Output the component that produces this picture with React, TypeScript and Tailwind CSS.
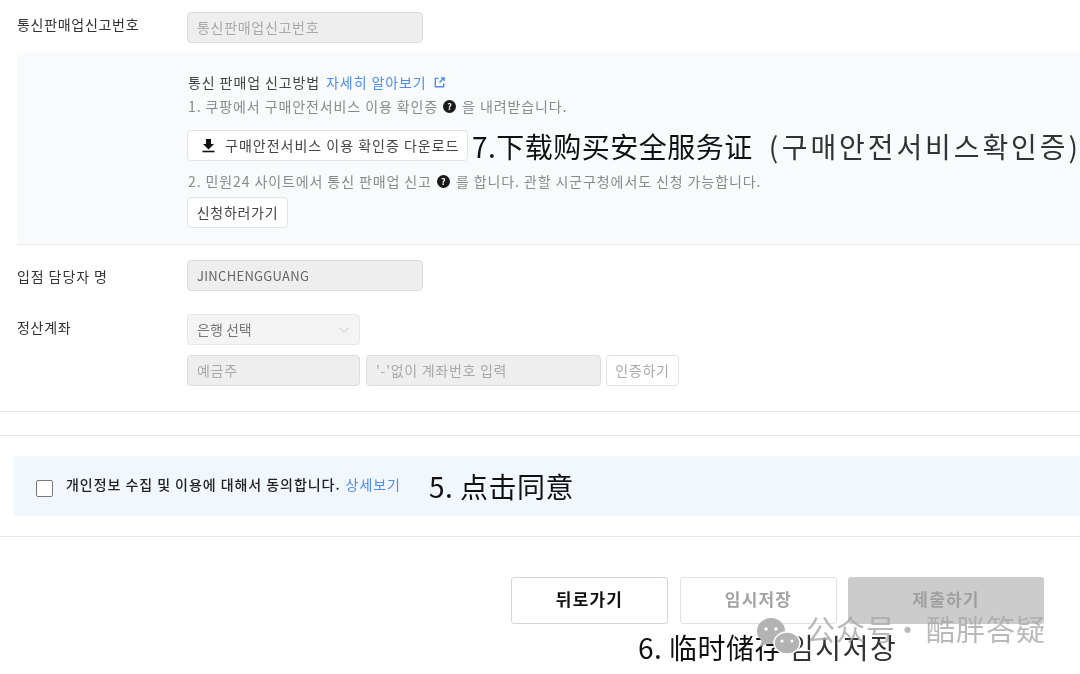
import React from 'react';

const KO = "font-['Noto_Sans_CJK_KR','Noto_Sans',sans-serif]";
const ANNOT = "font-['Noto_Sans_CJK_SC','Noto_Sans_CJK_KR',sans-serif]";

function HelpDot() {
    return (
        <span className="inline-flex items-center justify-center w-[13px] h-[13px] rounded-full bg-[#1a1a1a] text-white text-[9px] font-bold leading-none tracking-normal ml-[5px] mr-[6px]">?</span>
    );
}

function DisabledInput({ text, className = '', dark = false }: { text: string; className?: string; dark?: boolean }) {
    return (
        <div className={`h-[31px] flex items-center px-[9px] rounded-[4px] border border-[#dcdcdc] bg-[#eeeeee] ${dark ? 'text-[13px] text-[#666666] tracking-[0.3px]' : 'text-[14px] text-[#a9a9a9] tracking-[0.7px]'} ${className}`}>
            {text}
        </div>
    );
}

function Annotation({ children, className }: { children: React.ReactNode; className: string }) {
    return <div className={`absolute whitespace-nowrap text-[#111111] text-[28px] leading-none ${ANNOT} ${className}`}>{children}</div>;
}

export default function App() {
    return (
        <div className={`relative w-[1080px] h-[674px] overflow-hidden bg-white text-[#333333] ${KO} blur-[0.4px]`}>
            {/* 통신판매업 */}
            <div className="flex pt-[12px] pl-[17px]">
                <div className="w-[170px] text-[14px] tracking-[0.7px] leading-[25px] text-[#333333]">통신판매업신고번호</div>
                <DisabledInput text="통신판매업신고번호" className="w-[236px]" />
            </div>

            {/* Guide panel */}
            <div className="ml-[17px] mt-[10px] h-[192px] pl-[170px] pt-[19px] bg-[#f9fafc] border-b border-[#e9e9e9] text-[14px] tracking-[0.9px]">
                <div className="flex items-center h-[20px] pl-[1px] text-[#444444]">
                    통신 판매업 신고방법
                    <span className="ml-[6px] text-[#4d8df0]">자세히 알아보기</span>
                    <svg className="ml-[6px] w-[13px] h-[13px] text-[#4d8df0]" viewBox="0 0 14 14" fill="none" stroke="currentColor" strokeWidth="1.5">
                        <path d="M6 2.5H2.5v9h9V8" />
                        <path d="M7 7l5-5M8.5 2H12v3.5" />
                    </svg>
                </div>
                <div className="flex items-center h-[20px] mt-[4px] pl-[1px] text-[#8a8a8a]">
                    1. 쿠팡에서 구매안전서비스 이용 확인증<HelpDot />을 내려받습니다.
                </div>
                <button className="mt-[14px] flex items-center w-[281px] h-[31px] pl-[13px] bg-white border border-[#dfe3ea] rounded-[4px] tracking-[1px] text-[#444444] whitespace-nowrap">
                    <svg className="w-[15px] h-[15px] mr-[9px] text-[#111111]" viewBox="0 0 15 15" fill="currentColor">
                        <path d="M5 1h5v5h3l-5.5 5.5L2 6h3z" />
                        <rect x="1.5" y="12.7" width="12" height="1.6" />
                    </svg>
                    구매안전서비스 이용 확인증 다운로드
                </button>
                <div className="flex items-center h-[20px] mt-[10px] pl-[1px] text-[#8a8a8a]">
                    2. 민원24 사이트에서 통신 판매업 신고<HelpDot />를 합니다. 관할 시군구청에서도 신청 가능합니다.
                </div>
                <button className="mt-[6px] block w-[101px] h-[31px] bg-white border border-[#dfe3ea] rounded-[4px] tracking-[0.7px] text-[#444444] whitespace-nowrap">
                    신청하러가기
                </button>
            </div>

            {/* 담당자 */}
            <div className="flex mt-[15px] pl-[17px]">
                <div className="w-[170px] text-[14px] tracking-[0.9px] leading-[33px] text-[#333333]">입점 담당자 명</div>
                <DisabledInput text="JINCHENGGUANG" className="w-[236px]" dark />
            </div>

            {/* 정산계좌 */}
            <div className="flex mt-[21px] pl-[17px]">
                <div className="w-[170px] text-[14px] tracking-[0.7px] leading-[26px] text-[#333333]">정산계좌</div>
                <div className="flex flex-col gap-[10px]">
                    <div className="w-[173px] h-[31px] flex items-center justify-between px-[9px] rounded-[4px] border border-[#e6e6e6] bg-[#f4f4f4] text-[14px] text-[#777777]">
                        은행 선택
                        <svg className="w-[12px] h-[12px] text-[#c4c4c4]" viewBox="0 0 12 12" fill="none" stroke="currentColor" strokeWidth="1">
                            <path d="M1 3.5l5 5 5-5" />
                        </svg>
                    </div>
                    <div className="flex">
                        <DisabledInput text="예금주" className="w-[173px]" />
                        <DisabledInput text="'-'없이 계좌번호 입력" className="w-[235px] ml-[6px]" />
                        <button className="ml-[5px] w-[73px] h-[31px] bg-white border border-[#e3e3e3] rounded-[4px] text-[14px] tracking-[0.7px] text-[#a9a9a9] whitespace-nowrap">인증하기</button>
                    </div>
                </div>
            </div>

            <div className="mt-[25px] border-t border-[#e6e6e6]" />
            <div className="mt-[23px] border-t border-[#e6e6e6]" />

            {/* 동의 */}
            <div className="ml-[14px] mt-[20px] h-[60px] flex items-center pl-[22px] bg-[#f2f6fd] text-[14px] tracking-[0.95px] whitespace-nowrap">
                <div className="w-[17px] h-[17px] mt-[4px] mr-[13px] bg-white border-[1.5px] border-[#777777] rounded-[2px]" />
                <span className="font-medium text-[#222222] -mt-[3px]">개인정보 수집 및 이용에 대해서 동의합니다.</span>
                <span className="ml-[5px] text-[#4d8df0] -mt-[3px]">상세보기</span>
            </div>
            <div className="mt-[20px] border-t border-[#e6e6e6]" />

            {/* Footer buttons */}
            <div className="flex justify-end pr-[36px] mt-[40px] text-[17px] tracking-[1.2px] font-bold">
                <button className="w-[157px] h-[47px] pb-[3px] bg-white border border-[#d5d7dc] rounded-[3px] text-[#111111]">뒤로가기</button>
                <button className="ml-[12px] w-[157px] h-[47px] pb-[3px] bg-white border border-[#e1e2e6] rounded-[3px] text-[#a3a3a3]">임시저장</button>
                <button className="ml-[11px] w-[196px] h-[47px] pb-[3px] bg-[#cccccc] rounded-[3px] text-[#a0a0a0]">제출하기</button>
            </div>

            {/* Annotations over the form */}
            <Annotation className="left-[472px] top-[132px] tracking-[0.5px]">
                7.下载购买安全服务证
                <span className="ml-[16px] text-[#333333]">(</span>
                <span className="ml-[3px] tracking-[2.9px] text-[#333333]">구매안전서비스확인증</span>
                <span className="text-[#333333]">)</span>
            </Annotation>
            <Annotation className="left-[429px] top-[472px] tracking-[0.5px]">5. 点击同意</Annotation>
            <Annotation className="left-[638px] top-[633px] tracking-[0.5px]">
                6. 临时储存<span className="ml-[5px] tracking-[1.5px] text-[#333333]">임시저장</span>
            </Annotation>

            {/* Watermark */}
            <svg className="absolute left-[756px] top-[616px] w-[46px] h-[40px] text-[#b3b3b3]" viewBox="0 0 46 40">
                <ellipse cx="15" cy="15" rx="14" ry="13" fill="currentColor" />
                <path d="M6 24l-2 7 8-4z" fill="currentColor" />
                <circle cx="10" cy="13" r="1.8" fill="#ffffff" />
                <circle cx="20" cy="13" r="1.8" fill="#ffffff" />
                <ellipse cx="31" cy="27" rx="13" ry="11" fill="currentColor" stroke="#ffffff" strokeWidth="1.5" />
                <circle cx="26" cy="25" r="1.6" fill="#ffffff" />
                <circle cx="36" cy="25" r="1.6" fill="#ffffff" />
            </svg>
            <div className={`absolute left-[806px] top-[612px] flex whitespace-nowrap text-[29px] leading-[32px] tracking-[1px] text-[#a8a8a8]/80 ${ANNOT}`}>
                <span>公众号</span>
                <span className="-ml-[3px]">·</span>
                <span className="ml-[3px]">酷胖答疑</span>
            </div>
        </div>
    );
}
